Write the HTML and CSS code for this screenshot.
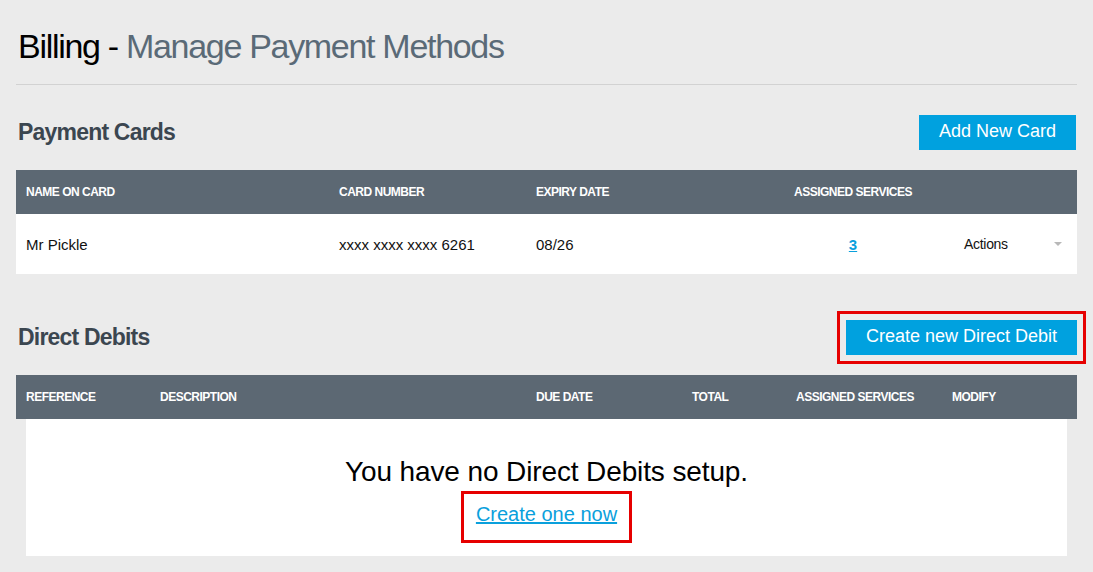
FILE: index.html
```html
<!DOCTYPE html>
<html lang="en">
<head>
  <meta charset="UTF-8">
  <meta name="viewport" content="width=device-width, initial-scale=1.0">
  <title>Billing - Manage Payment Methods</title>
  <link rel="stylesheet" href="styles.css">
</head>
<body>

  <div class="page">
    <h1 class="page-title">Billing - <span class="page-subtitle">Manage Payment Methods</span></h1>

    <!-- Payment cards -->
    <section class="panel cards-panel">
      <div class="panel-head">
        <h2>Payment Cards</h2>
        <a class="btn" href="#">Add New Card</a>
      </div>
      <table class="data-table">
        <colgroup>
          <col style="width: 313px">
          <col style="width: 197px">
          <col style="width: 226px">
          <col style="width: 202px">
          <col style="width: 123px">
        </colgroup>
        <thead>
          <tr>
            <th>Name on card</th>
            <th>Card number</th>
            <th>Expiry date</th>
            <th class="center">Assigned services</th>
            <th></th>
          </tr>
        </thead>
        <tbody>
          <tr>
            <td>Mr Pickle</td>
            <td>xxxx xxxx xxxx 6261</td>
            <td>08/26</td>
            <td class="center"><a class="count-link" href="#">3</a></td>
            <td>
              <div class="actions">Actions <span class="caret"></span></div>
            </td>
          </tr>
        </tbody>
      </table>
    </section>

    <!-- Direct debits -->
    <section class="panel debits-panel">
      <div class="panel-head">
        <h2>Direct Debits</h2>
        <a class="btn highlight" href="#">Create new Direct Debit</a>
      </div>
      <table class="data-table">
        <colgroup>
          <col style="width: 134px">
          <col style="width: 376px">
          <col style="width: 156px">
          <col style="width: 104px">
          <col style="width: 156px">
          <col style="width: 135px">
        </colgroup>
        <thead>
          <tr>
            <th>Reference</th>
            <th>Description</th>
            <th>Due date</th>
            <th>Total</th>
            <th>Assigned services</th>
            <th>Modify</th>
          </tr>
        </thead>
      </table>
      <div class="empty-state">
        <p>You have no Direct Debits setup.</p>
        <a class="create-link highlight" href="#">Create one now</a>
      </div>
    </section>
  </div>

</body>
</html>
```

FILE: styles.css
```css
body {
  margin: 0;
  background-color: #ebebeb;
  font-family: "Liberation Sans", Arial, sans-serif;
  color: #111;
}

.page {
  padding: 0 16px;
}

.page-title {
  margin: 0;
  padding: 26px 0 18px 2px;
  font-size: 34px;
  line-height: 40px;
  font-weight: normal;
  letter-spacing: -1.3px;
  color: #000;
  border-bottom: 1px solid #d2d2d2;
}

.page-subtitle {
  color: #5a6a77;
}

.cards-panel {
  margin-top: 30px;
}

.debits-panel {
  margin-top: 46px;
}

.panel-head {
  display: flex;
  justify-content: space-between;
  align-items: center;
  margin-bottom: 20px;
}

.panel-head h2 {
  margin: 0 0 0 2px;
  font-size: 23px;
  font-weight: bold;
  letter-spacing: -0.8px;
  color: #3b4650;
}

.btn {
  display: inline-block;
  height: 35px;
  padding: 0 20px 2px;
  box-sizing: border-box;
  line-height: 33px;
  font-size: 18px;
  color: #fff;
  background-color: #00a1df;
  text-decoration: none;
}

.cards-panel .btn {
  margin-right: 1px;
}

/* red annotation boxes */
.highlight {
  outline: 3px solid #e60000;
  outline-offset: 6px;
}

.data-table {
  width: 100%;
  table-layout: fixed;
  border-collapse: collapse;
  border-spacing: 0;
}

.data-table th {
  height: 44px;
  padding: 0 10px;
  background-color: #5c6873;
  color: #fff;
  font-size: 12px;
  font-weight: bold;
  letter-spacing: -0.5px;
  text-transform: uppercase;
  text-align: left;
  white-space: nowrap;
}

.data-table td {
  height: 60px;
  padding: 0 10px;
  background-color: #fff;
  font-size: 15px;
  white-space: nowrap;
}

.data-table .center {
  text-align: center;
}

.count-link {
  color: #0aa0dc;
  font-weight: bold;
}

.actions {
  display: flex;
  justify-content: space-between;
  align-items: center;
  font-size: 14px;
  letter-spacing: -0.3px;
}

.caret {
  width: 0;
  height: 0;
  margin-right: 5px;
  border-left: 4px solid transparent;
  border-right: 4px solid transparent;
  border-top: 4px solid #b8b8b8;
}

.empty-state {
  display: flex;
  flex-direction: column;
  align-items: center;
  margin: 0 10px;
  padding: 37px 0 16px;
  background-color: #fff;
}

.empty-state p {
  margin: 0;
  font-size: 28px;
  line-height: 32px;
  letter-spacing: -0.12px;
  color: #000;
}

.create-link {
  margin-top: 6px;
  padding: 9px 12px 15px;
  font-size: 20px;
  line-height: 22px;
  color: #0aa0dc;
  outline-offset: 0;
}
```
